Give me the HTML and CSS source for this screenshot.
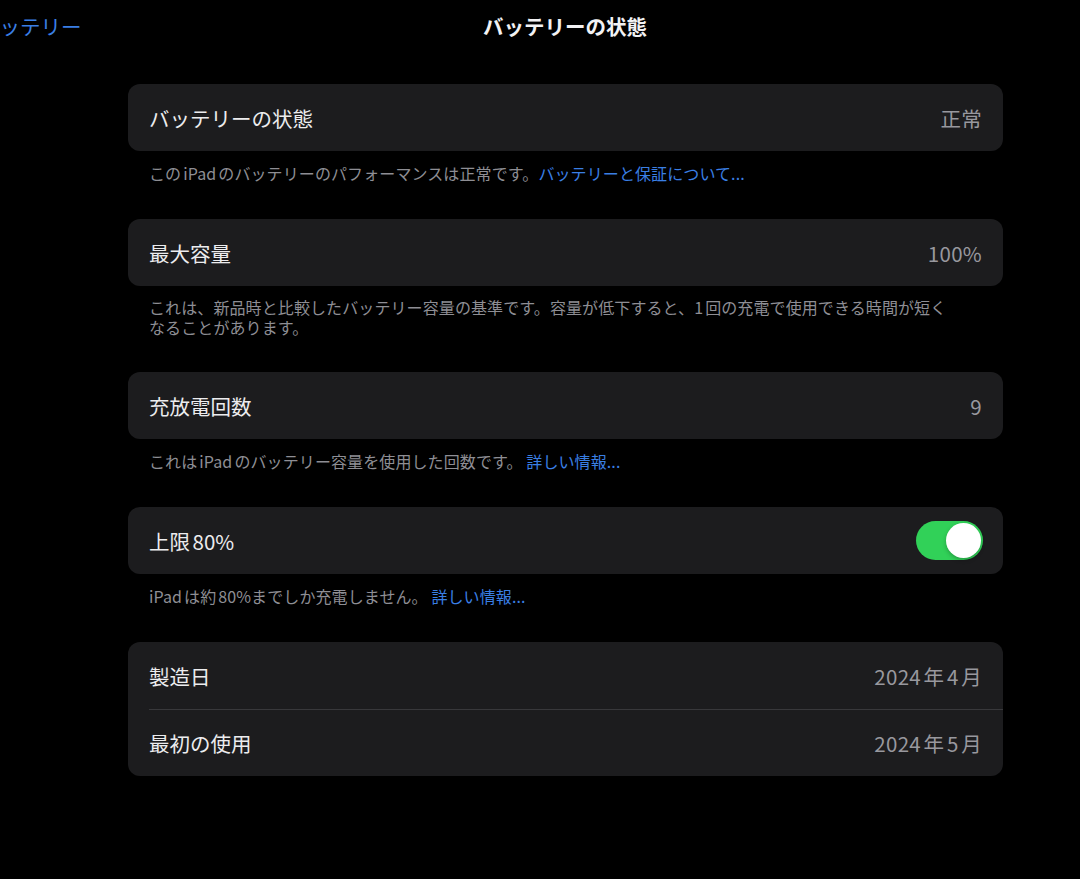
FILE: index.html
```html
<!DOCTYPE html>
<html lang="ja">
<head>
  <meta charset="UTF-8" />
  <meta name="viewport" content="width=device-width, initial-scale=1.0" />
  <title>バッテリーの状態</title>
  <link rel="stylesheet" href="styles.css">
</head>
<body>
  <header class="nav">
    <a href="#" class="nav-back">バッテリー</a>
    <h1 class="nav-title">バッテリーの状態</h1>
  </header>

  <main class="content">
    <section class="group">
      <div class="card">
        <div class="row">
          <span class="label">バッテリーの状態</span>
          <span class="value">正常</span>
        </div>
      </div>
      <p class="note">このiPadのバッテリーのパフォーマンスは正常です。<a href="#" class="link">バッテリーと保証について...</a></p>
    </section>

    <section class="group">
      <div class="card">
        <div class="row">
          <span class="label">最大容量</span>
          <span class="value">100%</span>
        </div>
      </div>
      <p class="note multi">これは、新品時と比較したバッテリー容量の基準です。容量が低下すると、1回の充電で使用できる時間が短く<br>なることがあります。</p>
    </section>

    <section class="group">
      <div class="card">
        <div class="row">
          <span class="label">充放電回数</span>
          <span class="value">9</span>
        </div>
      </div>
      <p class="note">これはiPadのバッテリー容量を使用した回数です。 <a href="#" class="link">詳しい情報...</a></p>
    </section>

    <section class="group">
      <div class="card">
        <div class="row">
          <span class="label">上限80%</span>
          <span class="toggle on"><span class="knob"></span></span>
        </div>
      </div>
      <p class="note">iPadは約80%までしか充電しません。 <a href="#" class="link">詳しい情報...</a></p>
    </section>

    <section class="group">
      <div class="card">
        <div class="row">
          <span class="label">製造日</span>
          <span class="value">2024年4月</span>
        </div>
        <div class="row">
          <span class="label">最初の使用</span>
          <span class="value">2024年5月</span>
        </div>
      </div>
    </section>
  </main>
</body>
</html>
```

FILE: styles.css
```css
* {
  margin: 0;
  padding: 0;
  box-sizing: border-box;
}
body {
  font-family: "Noto Sans CJK JP", "Noto Sans", sans-serif;
  background: #000;
  color: #e8e8ea;
  width: 1080px;
  height: 879px;
  overflow: hidden;
  text-autospace: normal;
}
.nav {
  height: 54px;
  display: flex;
  align-items: center;
  justify-content: center;
  position: relative;
}
.nav-back {
  position: absolute;
  left: -21px;
  top: 0;
  line-height: 52px;
  font-size: 20.5px;
  color: #3a7fe4;
  text-decoration: none;
}
.nav-title {
  font-size: 20.5px;
  font-weight: 700;
  color: #f2f2f4;
  margin-left: 50px;
  margin-top: -2px;
}
.content {
  padding: 30px 0 0 128px;
  width: 1003px;
}
.card {
  background: #1c1c1e;
  border-radius: 12px;
  overflow: hidden;
}
.row {
  height: 67px;
  display: flex;
  align-items: center;
  justify-content: space-between;
  padding: 0 21px;
  font-size: 20.5px;
  position: relative;
}
.row + .row::before {
  content: "";
  position: absolute;
  top: 0;
  left: 21px;
  right: 0;
  height: 1px;
  background: #38383b;
}
.label {
  color: #ececee;
}
.value {
  color: #98989e;
  letter-spacing: 0.3px;
}
.note {
  padding: 12px 21px 36px;
  font-size: 16px;
  line-height: 20px;
  color: #8e8e94;
  letter-spacing: 0.1px;
}
.note.multi {
  padding: 11px 21px 35px;
}
.link {
  color: #3a7fe4;
  text-decoration: none;
}
.toggle {
  width: 67px;
  height: 39px;
  border-radius: 20px;
  background: #39393d;
  padding: 2px;
  display: flex;
  margin-right: -1px;
}
.toggle.on {
  background: #31d158;
  justify-content: flex-end;
}
.knob {
  width: 35px;
  height: 35px;
  border-radius: 50%;
  background: #fff;
  box-shadow: 0 2px 4px rgba(0, 0, 0, 0.25);
}
```
